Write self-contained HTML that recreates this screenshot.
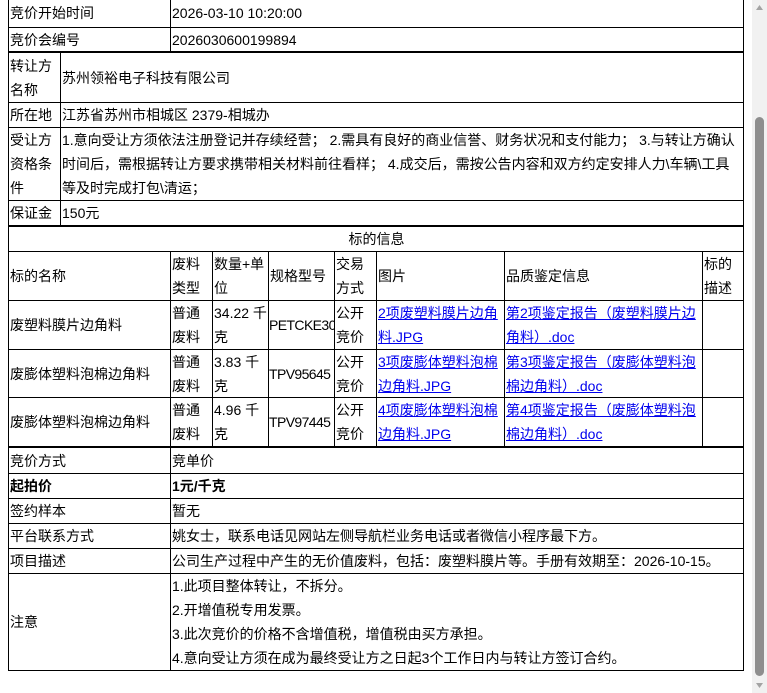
<!DOCTYPE html>
<html><head><meta charset="utf-8"><style>
html,body{margin:0;padding:0;width:767px;height:693px;overflow:hidden;background:#fff;position:relative;}
body{font-family:"Liberation Sans","Noto Sans CJK SC",sans-serif;font-size:14px;color:#000;}
.c{position:absolute;border:1px solid #000;box-sizing:border-box;display:flex;align-items:center;padding-left:1px;line-height:24px;white-space:nowrap;overflow:hidden;}
.ctr{justify-content:center;}
.b{font-weight:bold;}
.sq{letter-spacing:-0.6px;padding-left:0;}
a{color:#0000ee;text-decoration:underline;}
.tk{position:absolute;left:8px;width:736px;height:2px;background:#000;}
#sb{position:absolute;left:752px;top:0;width:15px;height:693px;background:#f1f1f1;}
#th{position:absolute;left:755px;top:117px;width:9px;height:559px;background:#8e8e8e;border-radius:5px;}
</style></head><body>
<div class="c" style="left:8px;top:-2px;width:163px;height:30px">竞价开始时间</div>
<div class="c" style="left:170px;top:-2px;width:574px;height:30px">2026-03-10 10:20:00</div>
<div class="c" style="left:8px;top:27px;width:163px;height:26px">竞价会编号</div>
<div class="c" style="left:170px;top:27px;width:574px;height:26px">2026030600199894</div>
<div class="tk" style="top:51px"></div>
<div class="c" style="left:8px;top:52px;width:53px;height:51px">转让方<br>名称</div>
<div class="c" style="left:60px;top:52px;width:684px;height:51px">苏州领裕电子科技有限公司</div>
<div class="c" style="left:8px;top:102px;width:53px;height:26px">所在地</div>
<div class="c" style="left:60px;top:102px;width:684px;height:26px">江苏省苏州市相城区 2379-相城办</div>
<div class="c" style="left:8px;top:127px;width:53px;height:74px">受让方<br>资格条<br>件</div>
<div class="c" style="left:60px;top:127px;width:684px;height:74px">1.意向受让方须依法注册登记并存续经营； 2.需具有良好的商业信誉、财务状况和支付能力； 3.与转让方确认<br>时间后，需根据转让方要求携带相关材料前往看样； 4.成交后，需按公告内容和双方约定安排人力\车辆\工具<br>等及时完成打包\清运；</div>
<div class="c" style="left:8px;top:200px;width:53px;height:26px">保证金</div>
<div class="c" style="left:60px;top:200px;width:684px;height:26px">150元</div>
<div class="tk" style="top:225px"></div>
<div class="c ctr" style="left:8px;top:226px;width:736px;height:26px">标的信息</div>
<div class="c" style="left:8px;top:251px;width:163px;height:50px">标的名称</div>
<div class="c" style="left:170px;top:251px;width:43px;height:50px">废料<br>类型</div>
<div class="c" style="left:212px;top:251px;width:57px;height:50px">数量+单<br>位</div>
<div class="c" style="left:268px;top:251px;width:67px;height:50px">规格型号</div>
<div class="c" style="left:334px;top:251px;width:43px;height:50px">交易<br>方式</div>
<div class="c" style="left:376px;top:251px;width:129px;height:50px">图片</div>
<div class="c" style="left:504px;top:251px;width:199px;height:50px">品质鉴定信息</div>
<div class="c" style="left:702px;top:251px;width:42px;height:50px">标的<br>描述</div>

<div class="c" style="left:8px;top:300px;width:163px;height:50px">废塑料膜片边角料</div>
<div class="c" style="left:170px;top:300px;width:43px;height:50px">普通<br>废料</div>
<div class="c" style="left:212px;top:300px;width:57px;height:50px">34.22 千<br>克</div>
<div class="c sq" style="left:268px;top:300px;width:67px;height:50px">PETCKE30</div>
<div class="c" style="left:334px;top:300px;width:43px;height:50px">公开<br>竞价</div>
<div class="c" style="left:376px;top:300px;width:129px;height:50px"><a>2项废塑料膜片边角<br>料.JPG</a></div>
<div class="c" style="left:504px;top:300px;width:199px;height:50px"><a>第2项鉴定报告（废塑料膜片边<br>角料）.doc</a></div>
<div class="c" style="left:702px;top:300px;width:42px;height:50px"></div>

<div class="c" style="left:8px;top:349px;width:163px;height:49px">废膨体塑料泡棉边角料</div>
<div class="c" style="left:170px;top:349px;width:43px;height:49px">普通<br>废料</div>
<div class="c" style="left:212px;top:349px;width:57px;height:49px">3.83 千<br>克</div>
<div class="c sq" style="left:268px;top:349px;width:67px;height:49px">TPV95645</div>
<div class="c" style="left:334px;top:349px;width:43px;height:49px">公开<br>竞价</div>
<div class="c" style="left:376px;top:349px;width:129px;height:49px"><a>3项废膨体塑料泡棉<br>边角料.JPG</a></div>
<div class="c" style="left:504px;top:349px;width:199px;height:49px"><a>第3项鉴定报告（废膨体塑料泡<br>棉边角料）.doc</a></div>
<div class="c" style="left:702px;top:349px;width:42px;height:49px"></div>

<div class="c" style="left:8px;top:397px;width:163px;height:50px">废膨体塑料泡棉边角料</div>
<div class="c" style="left:170px;top:397px;width:43px;height:50px">普通<br>废料</div>
<div class="c" style="left:212px;top:397px;width:57px;height:50px">4.96 千<br>克</div>
<div class="c sq" style="left:268px;top:397px;width:67px;height:50px">TPV97445</div>
<div class="c" style="left:334px;top:397px;width:43px;height:50px">公开<br>竞价</div>
<div class="c" style="left:376px;top:397px;width:129px;height:50px"><a>4项废膨体塑料泡棉<br>边角料.JPG</a></div>
<div class="c" style="left:504px;top:397px;width:199px;height:50px"><a>第4项鉴定报告（废膨体塑料泡<br>棉边角料）.doc</a></div>
<div class="c" style="left:702px;top:397px;width:42px;height:50px"></div>
<div class="tk" style="top:446px"></div>
<div class="c" style="left:8px;top:447px;width:163px;height:27px">竞价方式</div>
<div class="c" style="left:170px;top:447px;width:574px;height:27px">竞单价</div>
<div class="c b" style="left:8px;top:473px;width:163px;height:26px">起拍价</div>
<div class="c b" style="left:170px;top:473px;width:574px;height:26px">1元/千克</div>
<div class="c" style="left:8px;top:498px;width:163px;height:26px">签约样本</div>
<div class="c" style="left:170px;top:498px;width:574px;height:26px">暂无</div>
<div class="c" style="left:8px;top:523px;width:163px;height:26px">平台联系方式</div>
<div class="c" style="left:170px;top:523px;width:574px;height:26px">姚女士，联系电话见网站左侧导航栏业务电话或者微信小程序最下方。</div>
<div class="c" style="left:8px;top:548px;width:163px;height:26px">项目描述</div>
<div class="c" style="left:170px;top:548px;width:574px;height:26px">公司生产过程中产生的无价值废料，包括：废塑料膜片等。手册有效期至：2026-10-15。</div>
<div class="c" style="left:8px;top:573px;width:163px;height:98px">注意</div>
<div class="c" style="left:170px;top:573px;width:574px;height:98px">1.此项目整体转让，不拆分。<br>2.开增值税专用发票。<br>3.此次竞价的价格不含增值税，增值税由买方承担。<br>4.意向受让方须在成为最终受让方之日起3个工作日内与转让方签订合约。</div>
<div id="sb"></div>
<div id="th"></div>
<svg style="position:absolute;left:752px;top:0" width="15" height="693">
<polygon points="4,10 11,10 7.5,5" fill="#a3a3a3"/>
<polygon points="4,683 11,683 7.5,688" fill="#a3a3a3"/>
</svg>
</body></html>
